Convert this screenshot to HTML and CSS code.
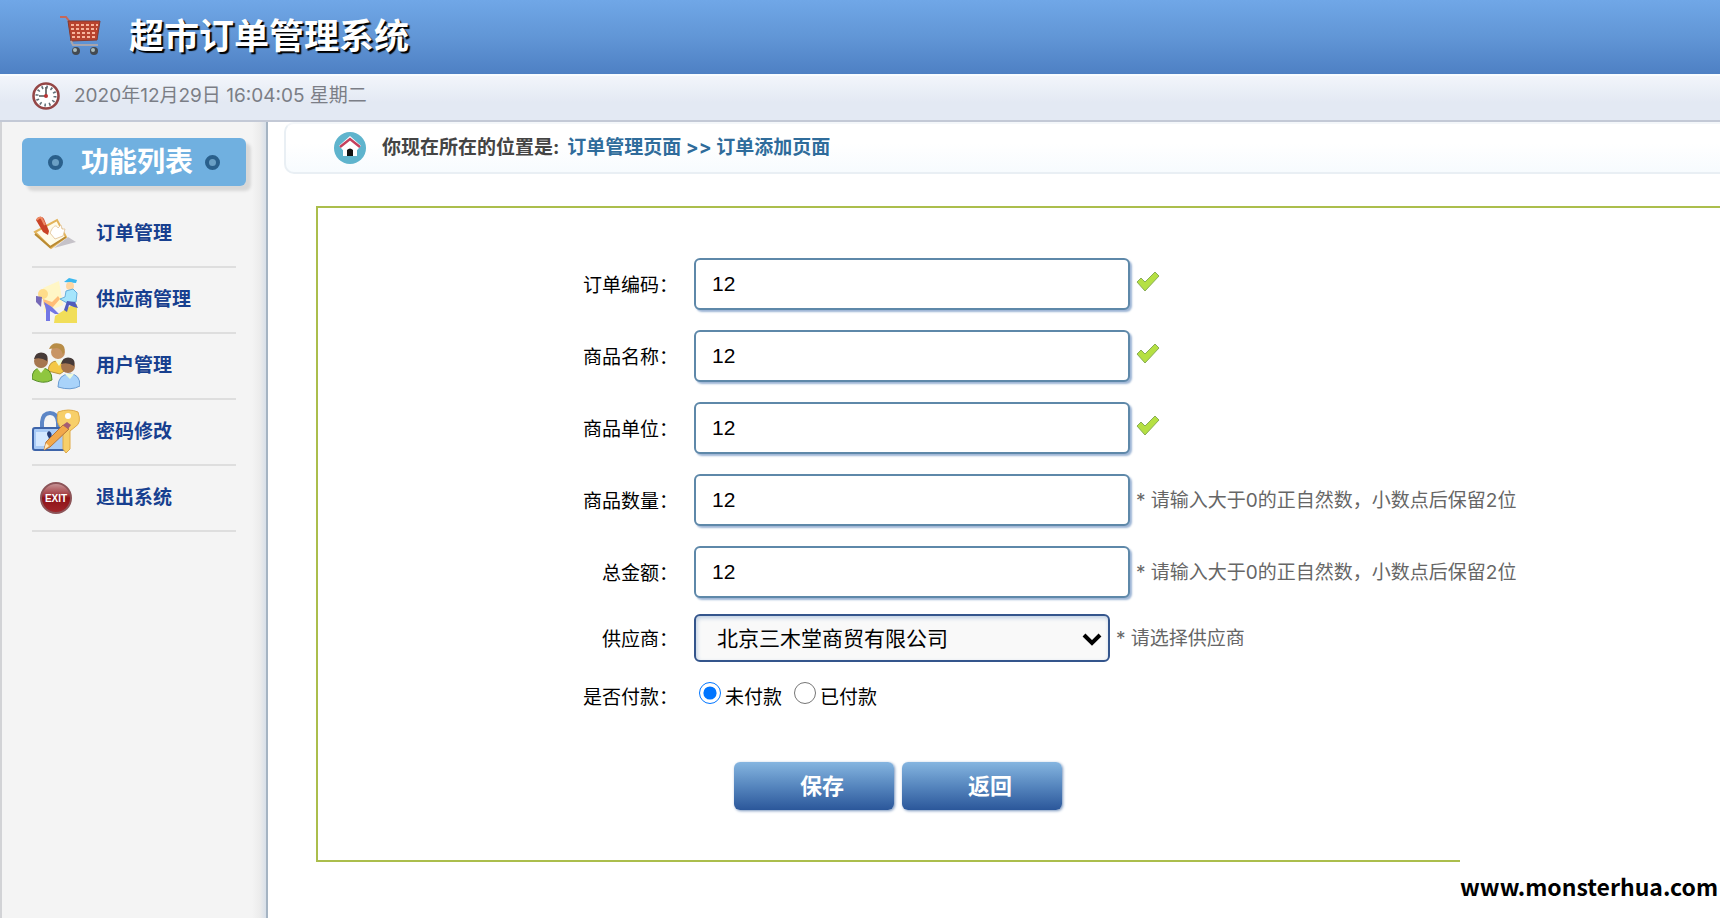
FILE: index.html
```
<!DOCTYPE html>
<html lang="zh-CN">
<head>
	<meta charset="UTF-8">
	<title>超市订单管理系统</title>
	<link rel="stylesheet" href="styles.css">
</head>
<body>
	<header class="header">
		<svg class="cart" viewBox="0 0 42 42">
			<path d="M1 2l6 0 3 4 3 21" fill="none" stroke="#c4685a" stroke-width="2"/>
			<path d="M9 6h32l-3 19-26 1z" fill="#b8432f" stroke="#813c34"/>
			<path d="M12 10h27M12 14h26M13 18h25M13 22h24" stroke="#f7b49c" stroke-width="2" stroke-dasharray="3 2"/>
			<path d="M12 26l2 4h25" fill="none" stroke="#a7a5ae" stroke-width="2"/>
			<circle cx="17" cy="36" r="4" fill="#434950"/>
			<circle cx="35" cy="36" r="4" fill="#434950"/>
			<circle cx="16" cy="35" r="2" fill="#abb"/>
			<circle cx="34" cy="35" r="2" fill="#abb"/>
		</svg>
		<h1>超市订单管理系统</h1>
	</header>
	<section class="time">
		<svg class="clock" viewBox="0 0 28 28">
			<circle cx="14" cy="14" r="12.5" fill="#fff" stroke="#944646" stroke-width="2.6"/>
			<circle cx="14" cy="14" r="9" fill="none" stroke="#607078" stroke-width="3" stroke-dasharray="1.6 3.11"/>
			<path d="M14 5v9H7" fill="none" stroke="#555" stroke-width="1.6"/>
			<circle cx="14" cy="14" r="2" fill="#b33"/>
		</svg>
		<span>2020年12月29日 16:04:05 星期二</span>
	</section>
	<div class="main">
		<aside class="sidebar">
			<h2><i class="dot"></i><span>功能列表</span><i class="dot"></i></h2>
			<ul class="menu">
				<li><a href="#">
					<svg viewBox="0 0 48 48">
						<path d="M22 38l22-6-8-5z" fill="#c5c2c8"/>
						<path d="M3 22L25 10l9 17-15 11z" fill="#fffbe8" stroke="#e3b45b" stroke-width="2"/>
						<path d="M3 24l15 13 16-10" fill="none" stroke="#b98a32" stroke-width="2"/>
						<path d="M18 23c3-7 6-9 8-5l3-3 1 4 3 0-2 7-8 3z" fill="#fff" stroke="#e6cba5"/>
						<path d="M4 10c2-4 6-4 8-1l5 12-1 4-5-3z" fill="#c94326"/>
						<path d="M5 10c2-3 4-3 5-1l3 6" fill="none" stroke="#ee8d66" stroke-width="2"/>
					</svg>订单管理</a></li>
				<li><a href="#">
					<svg viewBox="0 0 48 48">
						<path d="M11 12l16-7 4 24-19 8z" fill="#fff6c6"/>
						<path d="M23 40l17-11 5-1v19H22z" fill="#f1de59"/>
						<circle cx="11" cy="18" r="5" fill="#ffdc8a"/>
						<path d="M4 20l6 1-1 10-5-5z" fill="#7669b7"/>
						<path d="M11 23l9 3 6-6 2 3-7 8-9-2z" fill="#ffbd78"/>
						<path d="M12 26l8 5 7 7-4 0-5-3v10h-4V34z" fill="#7377e4"/>
						<path d="M32 6l5-4 8 2-1 3z" fill="#3cb8ef"/>
						<circle cx="38" cy="10" r="4" fill="#ffd6a2"/>
						<path d="M34 15l7-2 4 4-1 9-9 1-7-4 5-2z" fill="#a5e5fc" stroke="#66afdd"/>
						<path d="M35 25l8 1 3 6-4-1-5-2-2 7-3-2z" fill="#525dbc"/>
					</svg>供应商管理</a></li>
				<li><a href="#">
					<svg viewBox="0 0 48 48">
						<path d="M16 29q1-10 9-10 9 0 10 8l-7 5z" fill="#f4c844" stroke="#b89437"/>
						<path d="M0 37q0-11 9-11 11 0 11 12-9 5-20-1z" fill="#8fc63f" stroke="#568d28"/>
						<path d="M26 45q0-13 12-13 10 0 10 12-9 5-22 1z" fill="#a9d3fa" stroke="#6a9cd2"/>
						<path d="M5 26l4 5 4-5zM33 32l5 5 4-5zM23 18l4 6 4-6z" fill="#eefbdb"/>
						<circle cx="26" cy="10" r="7" fill="#c89465"/>
						<circle cx="9" cy="19" r="7" fill="#a6764f"/>
						<circle cx="36" cy="24" r="7" fill="#a6764f"/>
						<path d="M17 7q3-8 12-5 6 3 2 11-1-6-6-7z" fill="#b88d47"/>
						<path d="M2 17q2-8 10-6 5 2 3 8-6-4-13-2zM29 22q2-8 10-6 5 2 3 8-6-4-13-2z" fill="#463a38"/>
					</svg>用户管理</a></li>
				<li><a href="#">
					<svg viewBox="0 0 48 48">
						<path d="M10 21v-7q1-9 8-9t8 9v7" fill="none" stroke="#5d86c6" stroke-width="4"/>
						<rect x="1" y="20" width="32" height="22" rx="2" fill="#a9cbf6" stroke="#3d64a9" stroke-width="2"/>
						<path d="M4 24h12v14H4z" fill="#d4e8ff"/>
						<path d="M26 4q11-4 20 0 4 11-3 15l-5 4v18l-4 4-3-4V22q-8-6-5-18z" fill="#f7cf6a" stroke="#dfa947"/>
						<circle cx="36" cy="8" r="3" fill="#fff"/>
						<path d="M17 23q4 2 2 7l1 6h-4l1-6q-4-5 0-7z" fill="#263c75"/>
						<path d="M12 42l2-8 17-17 6 4-19 18z" fill="#f2a84a" stroke="#b6753a"/>
						<path d="M31 17l4-3 4 3-3 4z" fill="#a45d74"/>
						<path d="M12 42l2-7 3 3z" fill="#ffe9c0"/>
					</svg>密码修改</a></li>
				<li><a href="#">
					<svg viewBox="0 0 48 48">
						<defs>
							<linearGradient id="exit" x1="0" y1="0" x2="0" y2="1">
								<stop offset="0" stop-color="#c99a9c"/>
								<stop offset="0.4" stop-color="#a33b40"/>
								<stop offset="0.5" stop-color="#8d1217"/>
								<stop offset="1" stop-color="#a1272b"/>
							</linearGradient>
						</defs>
						<circle cx="24" cy="24" r="15" fill="url(#exit)" stroke="#8c5458" stroke-width="2"/>
						<text class="exit-text" x="24" y="28" text-anchor="middle">EXIT</text>
					</svg>退出系统</a></li>
			</ul>
		</aside>
		<div class="content">
			<nav class="location">
				<svg class="home" viewBox="0 0 32 32">
					<circle cx="16" cy="16" r="16" fill="#5fb4cd"/>
					<path d="M9 16l7-6 7 6v8H9z" fill="#fff"/>
					<path d="M7 16l9-8 9 8" fill="none" stroke="#fff" stroke-width="6"/>
					<path d="M6 15l10-8 10 8" fill="none" stroke="#c5405c" stroke-width="2.5"/>
					<path d="M13 24v-6q3-3 6 0v6z" fill="#111"/>
				</svg>
				<strong>你现在所在的位置是:</strong>
				<a href="#">订单管理页面 &gt;&gt; 订单添加页面</a>
			</nav>
			<form class="order-form">
				<div class="row">
					<label for="billCode">订单编码：</label>
					<input type="text" id="billCode" value="12">
					<svg class="yes" viewBox="0 0 24 24"><use href="#tick"/></svg>
				</div>
				<div class="row">
					<label for="productName">商品名称：</label>
					<input type="text" id="productName" value="12">
					<svg class="yes" viewBox="0 0 24 24"><use href="#tick"/></svg>
				</div>
				<div class="row">
					<label for="productUnit">商品单位：</label>
					<input type="text" id="productUnit" value="12">
					<svg class="yes" viewBox="0 0 24 24">
						<path id="tick" d="M1 12l4-4 4 4L19 2l4 4L9 21z" fill="#b5e043" stroke="#88ad54" stroke-linejoin="round"/>
					</svg>
				</div>
				<div class="row">
					<label for="productCount">商品数量：</label>
					<input type="text" id="productCount" value="12">
					<span class="hint">* 请输入大于0的正自然数，小数点后保留2位</span>
				</div>
				<div class="row">
					<label for="totalPrice">总金额：</label>
					<input type="text" id="totalPrice" value="12">
					<span class="hint">* 请输入大于0的正自然数，小数点后保留2位</span>
				</div>
				<div class="row select-row">
					<label for="providerId">供应商：</label>
					<div class="select">
						<select id="providerId">
							<option>北京三木堂商贸有限公司</option>
						</select>
						<svg class="arrow" viewBox="0 0 20 14"><path d="M2 3l8 8 8-8" fill="none" stroke="#000" stroke-width="4"/></svg>
					</div>
					<span class="hint">* 请选择供应商</span>
				</div>
				<div class="row pay-row" role="radiogroup" aria-labelledby="pay">
					<span class="name" id="pay">是否付款：</span>
					<input type="radio" id="unpaid" name="isPayment" checked>
					<label class="pay" for="unpaid">未付款</label>
					<input type="radio" id="paid" name="isPayment">
					<label class="pay" for="paid">已付款</label>
				</div>
				<div class="buttons">
					<button type="button">保存</button>
					<button type="button">返回</button>
				</div>
			</form>
		</div>
	</div>
	<div class="site">www.monsterhua.com</div>
</body>
</html>
```
FILE: styles.css
```
* {
	box-sizing: border-box;
}
body {
	position: relative;
	display: flex;
	flex-direction: column;
	min-height: 100vh;
	margin: 0;
	font-family: Inter, "Noto Sans CJK SC", sans-serif;
	font-size: 19px;
	line-height: 28px;
	background: #fff;
}
a {
	text-decoration: none;
}
.header {
	display: flex;
	align-items: center;
	gap: 28px;
	height: 74px;
	padding: 0 0 2px 59px;
	background: linear-gradient(#70a7e7, #6196d6 50%, #4e80c4);
}
.cart {
	width: 42px;
	height: 42px;
}
.header h1 {
	margin: 0;
	font-size: 35px;
	line-height: 48px;
	color: #fff;
	text-shadow: 2px 2px 1px #000;
}
.time {
	display: flex;
	align-items: center;
	gap: 14px;
	height: 48px;
	padding: 0 0 4px 32px;
	border-top: 2px solid #f8fcff;
	border-bottom: 2px solid #c3c9d6;
	background: linear-gradient(#f2f5fb, #e3e9f3 60%);
	color: #7b7e86;
}
.clock {
	width: 28px;
	height: 28px;
}
.main {
	display: flex;
	flex: 1;
}
.sidebar {
	flex: none;
	width: 268px;
	padding: 16px 20px 0;
	border-left: 2px solid #d2d3d6;
	border-right: 2px solid #a5b4c3;
	background: linear-gradient(to right, #f4f4f4 250px, #ececec 258px, #d8e0e9);
}
.sidebar h2 {
	display: flex;
	align-items: center;
	justify-content: center;
	gap: 12px;
	width: 224px;
	height: 48px;
	margin: 0;
	border-radius: 6px;
	background: #70b0e0;
	box-shadow: 5px 5px 3px #d8d8d8;
	color: #fff;
	font-size: 28px;
	line-height: 48px;
}
.sidebar h2 span {
	margin-left: 6px;
}
.dot {
	width: 15px;
	height: 15px;
	border: 4px solid #2a608c;
	border-radius: 50%;
	background: #6a9fc4;
}
.menu {
	width: 204px;
	margin: 16px 0 0 10px;
	padding: 0;
	list-style: none;
}
.menu li {
	height: 66px;
	border-bottom: 2px solid #dedede;
}
.menu a {
	display: flex;
	align-items: center;
	gap: 16px;
	height: 64px;
	color: #173f8f;
	font-weight: bold;
}
.menu svg {
	width: 48px;
	height: 48px;
}
.exit-text {
	fill: #fff;
	font: bold 10px "Liberation Sans", sans-serif;
}
.content {
	flex: 1;
	min-width: 0;
}
.location {
	display: flex;
	align-items: center;
	height: 52px;
	margin-left: 16px;
	padding-left: 48px;
	border: 2px solid #e9eff4;
	border-top-color: #f4f7fa;
	border-right: 0;
	border-radius: 10px 0 0 10px;
	background: linear-gradient(#fff 40%, #f7fbfe);
	color: #444;
}
.home {
	width: 32px;
	height: 32px;
	margin-right: 16px;
}
.location a {
	margin-left: 8px;
	color: #2f6c9b;
	font-weight: bold;
}
.order-form {
	margin: 32px 0 0 48px;
	padding: 50px 0;
	border: 2px solid #abbe4c;
	border-right: 0;
}
.row {
	display: flex;
	align-items: center;
	margin-bottom: 20px;
}
.row > label:first-child, .name {
	width: 360px;
	margin-right: 16px;
	padding-top: 4px;
	text-align: right;
}
.row input[type=text] {
	width: 436px;
	height: 52px;
	padding: 0 16px;
	border: 2px solid #5e88a9;
	border-radius: 6px;
	box-shadow: 2px 2px 2px #9db5d5;
	background: #fff;
	color: #000;
	font-family: "Liberation Sans", sans-serif;
	font-size: 21px;
}
.yes {
	width: 24px;
	height: 24px;
	margin: 0 0 4px 6px;
}
.hint {
	margin-left: 6px;
	padding-top: 2px;
	color: #666;
}
.select-row {
	margin: -4px 0 16px;
}
.select {
	position: relative;
}
.select select {
	appearance: none;
	display: block;
	width: 416px;
	height: 48px;
	padding: 0 40px 0 21px;
	border: 2px solid #34558c;
	border-radius: 6px;
	background: #f9f9f9;
	box-shadow: inset 1px 2px 4px #bccde1;
	color: #000;
	font-family: inherit;
	font-size: 21px;
}
.arrow {
	position: absolute;
	top: 18px;
	right: 8px;
	width: 20px;
	height: 14px;
	pointer-events: none;
}
.pay-row {
	height: 36px;
	margin: 0;
}
.pay-row input {
	width: 22px;
	height: 22px;
	margin: 0 4px 6px 5px;
}
.pay {
	padding-top: 4px;
}
.pay + input {
	margin-left: 12px;
}
.buttons {
	display: flex;
	gap: 8px;
	margin: 48px 0 0 416px;
}
.buttons button {
	width: 160px;
	height: 48px;
	padding: 0 0 4px 16px;
	border: 0;
	border-radius: 6px;
	background: linear-gradient(#85b5e0, #5686be 50%, #2b579a);
	box-shadow: 1px 1px 3px #7895bd;
	color: #fff;
	font: bold 22px "Noto Sans CJK SC", sans-serif;
}
.site {
	position: absolute;
	right: 0;
	bottom: 0;
	width: 260px;
	height: 64px;
	padding: 16px 2px 0 0;
	background: #fff;
	color: #000;
	font: bold 23px "Noto Sans CJK SC", sans-serif;
	line-height: 32px;
	text-align: right;
}
```
